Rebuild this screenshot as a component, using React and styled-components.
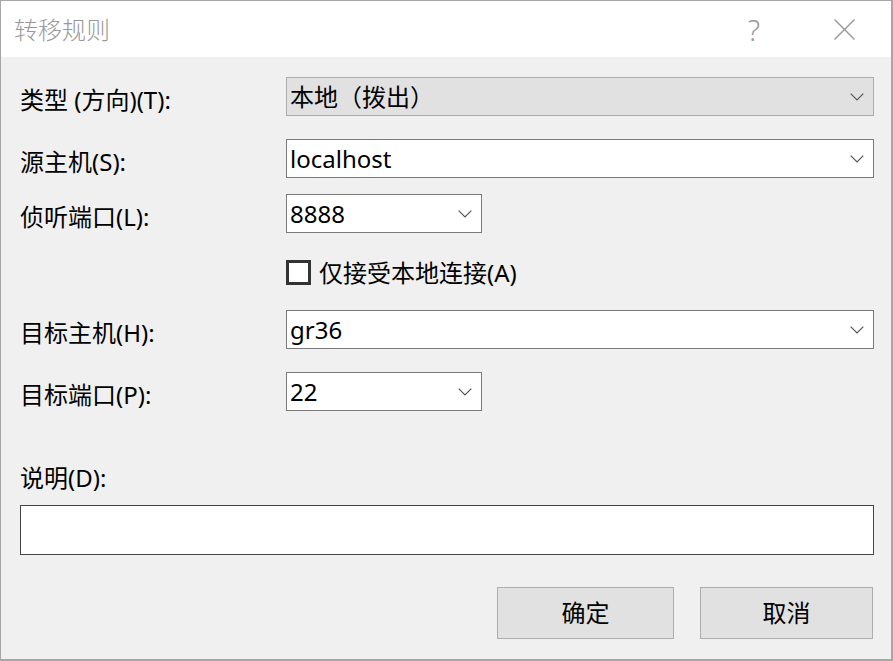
import React from "react";
import styled, { createGlobalStyle } from "styled-components";

const Global = createGlobalStyle`
  html, body { margin: 0; padding: 0; background: #f0f0f0; }
  * { box-sizing: border-box; }
`;

const FONT = `"Noto Sans", "Noto Sans CJK SC", sans-serif`;

const Window = styled.div`
  width: 893px;
  height: 661px;
  border: 1px solid #a6a6a6;
  border-right-width: 2px;
  border-bottom-width: 2px;
  background: #f0f0f0;
  display: flex;
  flex-direction: column;
  font-family: ${FONT};
  font-size: 24px;
  color: #000;
  overflow: hidden;
`;

const TitleBar = styled.div`
  height: 56px;
  background: #fff;
  display: flex;
  align-items: center;
  padding-left: 13px;
  padding-right: 2px;
  flex-shrink: 0;
`;

const Title = styled.div`
  flex: 1;
  color: #999;
  font-weight: 300;
  font-size: 24px;
  line-height: 1;
  padding-top: 2px;
`;

const CaptionButton = styled.div`
  width: 90px;
  height: 56px;
  display: flex;
  align-items: center;
  justify-content: center;
  color: #999;
  font-weight: 300;
  font-size: 29px;
`;

const Body = styled.div`
  flex: 1;
  display: flex;
  flex-direction: column;
  padding: 0 17px 0 19px;
`;

const Row = styled.div`
  display: flex;
  align-items: flex-start;
  margin-top: ${(p) => p.$mt}px;
`;

const Label = styled.div`
  width: 266px;
  flex-shrink: 0;
  line-height: 30px;
  padding-top: 8px;
  white-space: nowrap;
`;

const Combo = styled.div`
  height: 39px;
  width: ${(p) => (p.$w ? `${p.$w}px` : "auto")};
  flex: ${(p) => (p.$w ? "none" : "1")};
  display: flex;
  align-items: center;
  padding: 0 9px 0 3px;
  background: ${(p) => (p.$disabled ? "#e1e1e1" : "#fff")};
  border: 1px solid ${(p) => (p.$disabled ? "#adadad" : "#7a7a7a")};
  line-height: 30px;
`;

const ComboText = styled.span`
  flex: 1;
  white-space: nowrap;
`;

const CheckRow = styled.label`
  display: flex;
  align-items: center;
  gap: 8px;
  margin-left: 266px;
  margin-top: 27px;
  height: 25px;
  line-height: 30px;
`;

const CheckBox = styled.span`
  width: 25px;
  height: 25px;
  border: 3px solid #333;
  background: #fff;
  flex-shrink: 0;
`;

const DescLabel = styled.div`
  margin-top: 52px;
  line-height: 30px;
`;

const TextArea = styled.div`
  margin-top: 12px;
  height: 50px;
  background: #fff;
  border: 1px solid #444;
`;

const Buttons = styled.div`
  display: flex;
  justify-content: flex-end;
  gap: 26px;
  margin-top: 32px;
  padding-right: 1px;
`;

const Button = styled.div`
  width: ${(p) => p.$w}px;
  height: 52px;
  background: #e1e1e1;
  border: 1px solid #adadad;
  display: flex;
  align-items: center;
  justify-content: center;
  line-height: 30px;
`;

const Chevron = () => (
  <svg width="14" height="8" viewBox="0 0 14 8" aria-hidden="true">
    <polyline points="0.7,0.7 7,7 13.3,0.7" fill="none" stroke="#555" strokeWidth="1.2" />
  </svg>
);

const CloseIcon = () => (
  <svg width="21" height="21" viewBox="0 0 21 21" aria-hidden="true">
    <line x1="0.5" y1="0.5" x2="20.5" y2="20.5" stroke="#999" strokeWidth="1.4" />
    <line x1="20.5" y1="0.5" x2="0.5" y2="20.5" stroke="#999" strokeWidth="1.4" />
  </svg>
);

export default function App() {
  return (
    <>
      <Global />
      <Window>
        <TitleBar>
          <Title>转移规则</Title>
          <CaptionButton>?</CaptionButton>
          <CaptionButton>
            <CloseIcon />
          </CaptionButton>
        </TitleBar>
        <Body>
          <Row $mt={20}>
            <Label>类型 (方向)(T):</Label>
            <Combo $disabled>
              <ComboText>本地（拨出）</ComboText>
              <Chevron />
            </Combo>
          </Row>
          <Row $mt={23}>
            <Label>源主机(S):</Label>
            <Combo>
              <ComboText>localhost</ComboText>
              <Chevron />
            </Combo>
          </Row>
          <Row $mt={16}>
            <Label>侦听端口(L):</Label>
            <Combo $w={196}>
              <ComboText>8888</ComboText>
              <Chevron />
            </Combo>
          </Row>
          <CheckRow>
            <CheckBox />
            <span>仅接受本地连接(A)</span>
          </CheckRow>
          <Row $mt={25}>
            <Label>目标主机(H):</Label>
            <Combo>
              <ComboText>gr36</ComboText>
              <Chevron />
            </Combo>
          </Row>
          <Row $mt={23}>
            <Label>目标端口(P):</Label>
            <Combo $w={196}>
              <ComboText>22</ComboText>
              <Chevron />
            </Combo>
          </Row>
          <DescLabel>说明(D):</DescLabel>
          <TextArea />
          <Buttons>
            <Button $w={177}>确定</Button>
            <Button $w={173}>取消</Button>
          </Buttons>
        </Body>
      </Window>
    </>
  );
}
